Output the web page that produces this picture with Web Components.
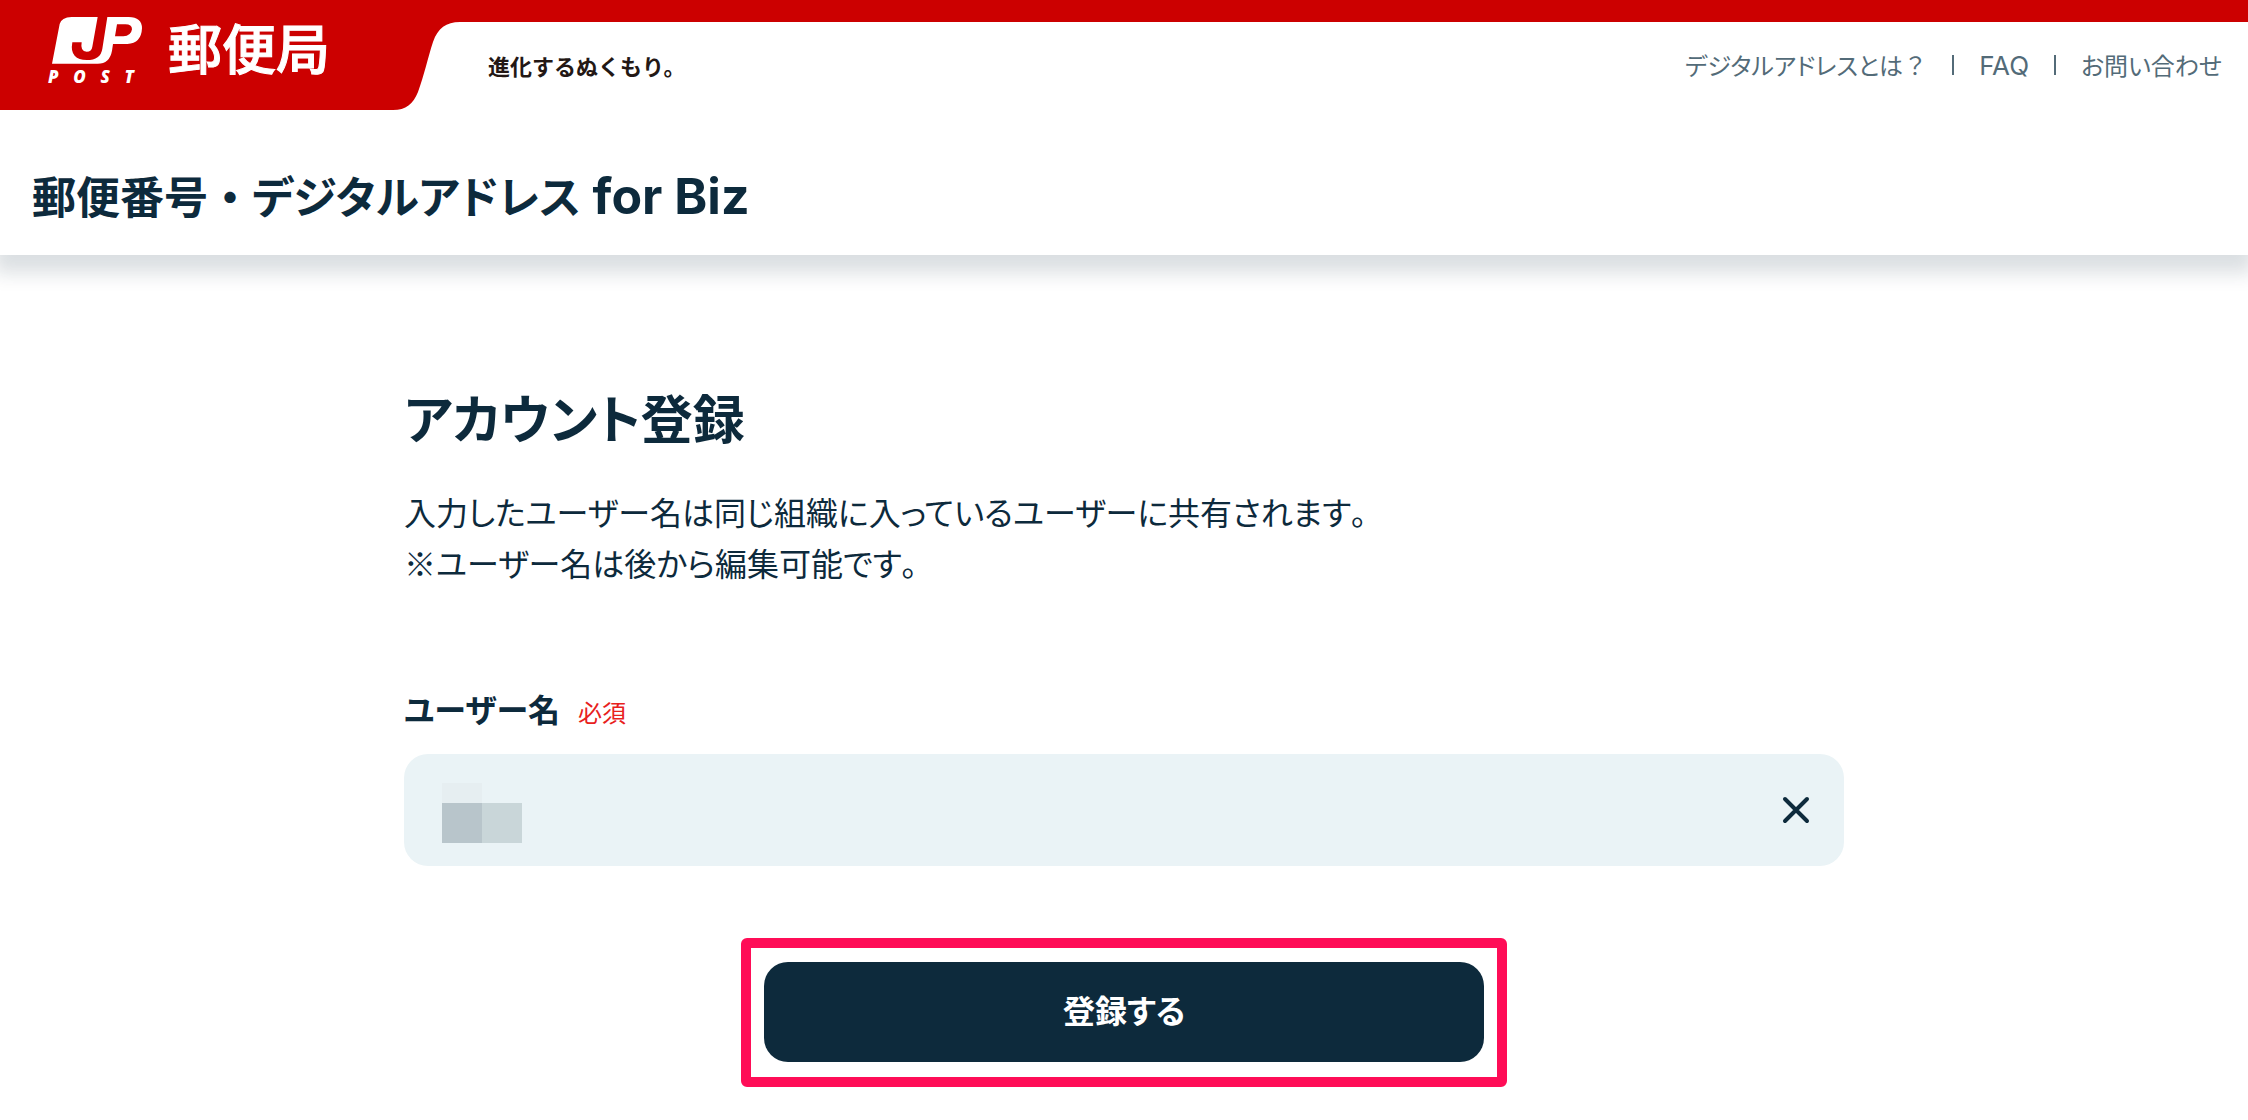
<!DOCTYPE html>
<html lang="ja">
<head>
<meta charset="utf-8">
<meta name="viewport" content="width=device-width, initial-scale=1">
<title>アカウント登録</title>
<style>
  :root { --navy: #0d2a3c; --red: #cc0000; --field: #eaf3f6; --muted: #536b78; --accent: #ff0d57; }
  body {
    margin: 0; background: #fff; color: var(--navy);
    font-family: "Noto Sans CJK JP", "Noto Sans", sans-serif;
    font-feature-settings: "palt";
  }
  .full { font-feature-settings: normal; }
  .latin { font-family: Inter, "Noto Sans", sans-serif; font-size: 26px; line-height: 0; }
  .latin.large { font-size: 50px; }
</style>
</head>
<body>
<site-header>
  <span slot="tagline">進化するぬくもり。</span>
  <nav-link slot="nav" href="#about">デジタルアドレスとは<span class="full">？</span></nav-link>
  <nav-link slot="nav" href="#faq"><span class="latin">FAQ</span></nav-link>
  <nav-link slot="nav" href="#contact">お問い合わせ</nav-link>
  <span slot="title">郵便番号<span class="full">・</span>デジタルアドレス<span class="latin large"> for Biz</span></span>
</site-header>
<account-form>
  <span slot="heading">アカウント登録</span>
  <span slot="lead">入力したユーザー名は同じ組織に入っているユーザーに共有されます<span class="full">。</span><br>※ユーザー名は後から編集可能です<span class="full">。</span></span>
  <user-field></user-field>
  <submit-button slot="action">登録する</submit-button>
</account-form>

<script>
const define = (name, html, setup) => customElements.define(name, class extends HTMLElement {
  connectedCallback() {
    if (this.shadowRoot) return;
    this.attachShadow({ mode: "open" }).innerHTML = html;
    if (setup) setup(this, this.shadowRoot);
  }
});

define("post-logo", `
<style>
  :host { display: block; color: #fff; }
  a { display: flex; align-items: flex-start; gap: 30px; color: inherit; text-decoration: none; }
  .mark { display: flex; flex-direction: column; width: 90px; }
  svg { display: block; width: 90px; height: 47px; margin-left: 4px; }
  .post { display: flex; justify-content: space-between; width: 86px; margin-top: 3px;
    font: italic 800 17px/20px "Open Sans", "Noto Sans", sans-serif; }
  .office { margin-top: -2px; font-size: 54px; line-height: 64px; font-weight: 500; -webkit-text-stroke: 1px currentColor; font-feature-settings: normal; }
</style>
<a href="#top">
  <span class="mark">
    <svg viewBox="36 21 270 141" aria-hidden="true">
      <path fill="#fff" fill-rule="evenodd" d="M95 21H173L157 110Q155 125 140 125Q120 125 125 97H97Q92 125 104 137Q116 150 140 150Q182 150 187 116L202 21H266Q306 22 306 55Q304 100 262 102H219L216 122Q209 161 173 161H36L59 42Q64 22 95 21ZM231 43L225 79H250Q273 78 276 58Q276 43 256 43Z"/>
    </svg>
    <span class="post"><span>P</span><span>O</span><span>S</span><span>T</span></span>
  </span>
  <span class="office">郵便局</span>
</a>`);

define("nav-link", `
<style>
  :host { display: block; }
  a { color: var(--muted); text-decoration: none; font-size: 24px; line-height: 32px; white-space: nowrap; }
</style>
<a><slot></slot></a>`, (host, root) => { root.querySelector("a").href = host.getAttribute("href"); });

define("site-header", `
<style>
  :host { display: block; background: #fff; box-shadow: 0 12px 18px 6px rgba(13,42,60,.15); }
  .top { display: flex; border-top: 22px solid var(--red); }
  .tab { display: grid; width: 460px; height: 88px; margin-top: -22px; padding-bottom: 22px; }
  .tab > * { grid-area: 1 / 1; }
  .tab svg { display: block; width: 460px; height: 110px; }
  post-logo { padding: 17px 0 0 48px; }
  .bar { flex: 1; display: flex; align-items: center; justify-content: space-between; padding: 0 26px 3px 28px; }
  .tagline { color: #231815; font-size: 22px; line-height: 32px; font-weight: 700; font-feature-settings: normal; }
  nav { display: flex; align-items: center; }
  ::slotted(nav-link:not(:first-of-type)) { display: flex; align-items: center; }
  ::slotted(nav-link:not(:first-of-type))::before { content: ""; width: 2px; height: 20px; margin: 0 25px; background: var(--muted); }
  h1 { margin: 0; padding: 52px 32px 27px; font-size: 44px; line-height: 66px; font-weight: 700; }
</style>
<header>
  <div class="top">
    <div class="tab">
      <svg viewBox="0 0 460 110" aria-hidden="true"><path fill="#cc0000" d="M0 0H460V22C446 22 438 28 433 42C428 57 424 76 418 92C413 104 406 110 393 110H0Z"/></svg>
      <post-logo></post-logo>
    </div>
    <div class="bar">
      <div class="tagline"><slot name="tagline"></slot></div>
      <nav><slot name="nav"></slot></nav>
    </div>
  </div>
  <h1><slot name="title"></slot></h1>
</header>`);

define("user-field", `
<style>
  :host { display: block; }
  .label { display: flex; align-items: baseline; gap: 18px; height: 48px; font-size: 32px; line-height: 48px; }
  label { font-weight: 700; }
  .required { color: #e8211d; font-size: 24px; line-height: 32px; }
  .box { display: flex; align-items: center; height: 112px; margin-top: 22px; border-radius: 24px; background: var(--field); }
  .value { flex: 1; display: grid; align-items: center; }
  .value > * { grid-area: 1 / 1; }
  input { box-sizing: border-box; width: 100%; height: 112px; padding: 0 38px; border: 0; outline: 0; background: none; color: inherit; font: inherit; font-size: 32px; }
  .mask { display: grid; grid-template: 20px 40px / 40px 40px; margin: 6px 0 0 38px; pointer-events: none; }
  .mask i:nth-child(1) { background: #e6eef1; }
  .mask i:nth-child(3) { background: #b8c5cb; }
  .mask i:nth-child(4) { background: #c9d6d9; }
  button { display: flex; margin: 0 24px 0 0; padding: 10px; border: 0; background: none; color: inherit; }
  svg { display: block; width: 28px; height: 28px; }
</style>
<div class="label"><label for="name">ユーザー名</label><span class="required">必須</span></div>
<div class="box">
  <div class="value">
    <input id="name" type="text" required>
    <span class="mask" aria-hidden="true"><i></i><i></i><i></i><i></i></span>
  </div>
  <button type="button" aria-label="クリア"><svg viewBox="0 0 28 28" fill="none" stroke="currentColor" stroke-width="4" stroke-linecap="round"><path d="M3 3L25 25M25 3L3 25"/></svg></button>
</div>`, (host, root) => {
  root.querySelector("button").addEventListener("click", () => {
    root.querySelector("input").value = "";
    root.querySelector(".mask").style.visibility = "hidden";
  });
});

define("submit-button", `
<style>
  :host { display: block; box-sizing: border-box; width: 766px; max-width: 100%; padding: 14px 13px 15px; border: 10px solid var(--accent); border-radius: 6px; }
  button { display: block; width: 100%; height: 100px; padding: 0 0 6px; border: 0; border-radius: 24px; background: var(--navy); color: #fff; font: inherit; font-feature-settings: inherit; font-size: 32px; font-weight: 700; }
</style>
<button type="submit"><slot></slot></button>`);

define("account-form", `
<style>
  :host { display: block; }
  main { box-sizing: border-box; max-width: 1440px; margin: 0 auto; padding: 123px 0 32px; }
  h2 { margin: 0; font-size: 52px; line-height: 78px; font-weight: 700; }
  p { margin: 30px 0 96px; font-size: 32px; line-height: 51px; }
  .action { display: flex; justify-content: center; margin-top: 72px; }
</style>
<main>
  <h2><slot name="heading"></slot></h2>
  <p><slot name="lead"></slot></p>
  <form>
    <slot></slot>
    <div class="action"><slot name="action"></slot></div>
  </form>
</main>`);
</script>
</body>
</html>
